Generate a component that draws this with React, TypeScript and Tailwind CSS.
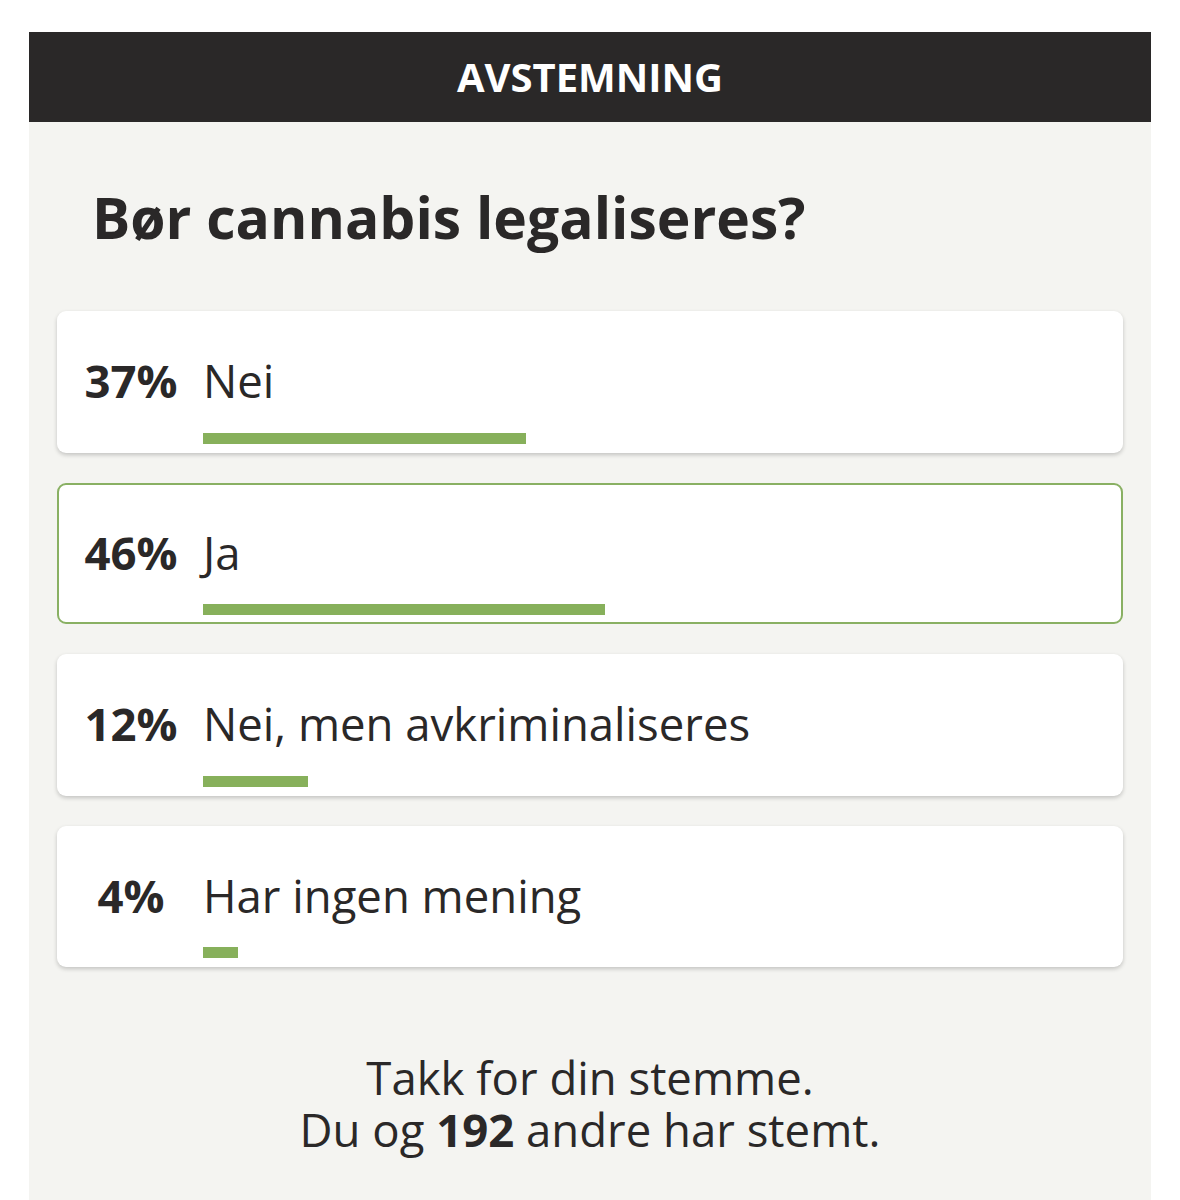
import React from 'react';

interface PollOption {
  label: string;
  percent: number;
  selected?: boolean;
}

const options: PollOption[] = [
  { label: 'Nei', percent: 37 },
  { label: 'Ja', percent: 46, selected: true },
  { label: 'Nei, men avkriminaliseres', percent: 12 },
  { label: 'Har ingen mening', percent: 4 },
];

const OptionCard: React.FC<{ option: PollOption }> = ({ option }) => (
  <div
    className={`flex rounded-[9px] bg-white border-2 pt-[45px] pb-[7px] pr-[45px] shadow-[0_2px_4px_rgba(0,0,0,0.2)] ${
      option.selected ? 'border-[#89b063] shadow-none' : 'border-transparent'
    }`}
  >
    <div className="w-[144px] shrink-0 text-center text-[45.5px] leading-none font-bold text-[#2a2828]">
      {option.percent}%
    </div>
    <div className="flex-1">
      <div className="text-[45.5px] leading-none text-[#2a2828]">{option.label}</div>
      <div className="mt-[29px] h-[11px]">
        <div className="h-full bg-[#87b05b]" style={{ width: `${option.percent}%` }} />
      </div>
    </div>
  </div>
);

export default function App() {
  return (
    <div className="min-h-[1200px] bg-white pt-[32px] px-[29px] font-['Open_Sans',sans-serif]">
      <div className="bg-[#f4f4f1] min-h-[1168px]">
        <div className="h-[90px] bg-[#2a2828] flex items-center justify-center">
          <span className="text-white text-[40px] leading-none font-bold">AVSTEMNING</span>
        </div>
        <h1 className="mt-[67px] pl-[63px] text-[57px] leading-none font-bold text-[#2a2828]">
          Bør cannabis legaliseres?
        </h1>
        <div className="mt-[65px] px-[28px] flex flex-col gap-[30px]">
          {options.map((o) => (
            <OptionCard key={o.label} option={o} />
          ))}
        </div>
        <div className="mt-[84px] text-center text-[45.5px] leading-[52px] text-[#2a2828]">
          <p>Takk for din stemme.</p>
          <p>
            Du og <span className="font-bold">192</span> andre har stemt.
          </p>
        </div>
      </div>
    </div>
  );
}
